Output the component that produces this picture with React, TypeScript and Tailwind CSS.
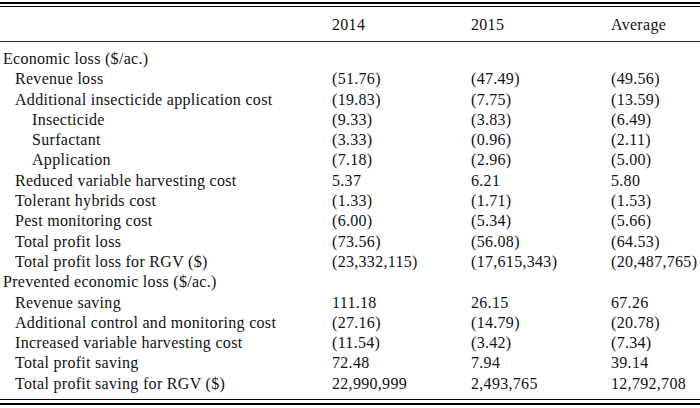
const ROWS: { label: string; level: number; v?: [string, string, string] }[] = [
  { label: "Economic loss ($/ac.)", level: 0 },
  { label: "Revenue loss", level: 1, v: ["(51.76)", "(47.49)", "(49.56)"] },
  { label: "Additional insecticide application cost", level: 1, v: ["(19.83)", "(7.75)", "(13.59)"] },
  { label: "Insecticide", level: 2, v: ["(9.33)", "(3.83)", "(6.49)"] },
  { label: "Surfactant", level: 2, v: ["(3.33)", "(0.96)", "(2.11)"] },
  { label: "Application", level: 2, v: ["(7.18)", "(2.96)", "(5.00)"] },
  { label: "Reduced variable harvesting cost", level: 1, v: ["5.37", "6.21", "5.80"] },
  { label: "Tolerant hybrids cost", level: 1, v: ["(1.33)", "(1.71)", "(1.53)"] },
  { label: "Pest monitoring cost", level: 1, v: ["(6.00)", "(5.34)", "(5.66)"] },
  { label: "Total profit loss", level: 1, v: ["(73.56)", "(56.08)", "(64.53)"] },
  { label: "Total profit loss for RGV ($)", level: 1, v: ["(23,332,115)", "(17,615,343)", "(20,487,765)"] },
  { label: "Prevented economic loss ($/ac.)", level: 0 },
  { label: "Revenue saving", level: 1, v: ["111.18", "26.15", "67.26"] },
  { label: "Additional control and monitoring cost", level: 1, v: ["(27.16)", "(14.79)", "(20.78)"] },
  { label: "Increased variable harvesting cost", level: 1, v: ["(11.54)", "(3.42)", "(7.34)"] },
  { label: "Total profit saving", level: 1, v: ["72.48", "7.94", "39.14"] },
  { label: "Total profit saving for RGV ($)", level: 1, v: ["22,990,999", "2,493,765", "12,792,708"] },
];

const INDENT = ["pl-[3px]", "pl-[15px]", "pl-[32px]"];

export default function App() {
  return (
    <div
      className="w-[700px] h-[408px] bg-white text-[#111] text-[16px] leading-[20.3px] tracking-[0.3px]"
      style={{ fontFamily: "'Liberation Serif', serif" }}
    >
      <div className="pt-[2px]">
        <div className="h-[2px] bg-black" />
        <div className="h-[2px]" />
        <div className="h-[1px] bg-black" />
      </div>
      {/* Header */}
      <div className="grid grid-cols-[332px_139px_140px_89px] h-[35px] items-end pb-[6px] border-b border-[#222]">
        <div />
        <div>2014</div>
        <div>2015</div>
        <div>Average</div>
      </div>
      <div className="pt-[7px]">
        {ROWS.map((r) => (
          <div key={r.label} className="grid grid-cols-[332px_139px_140px_89px] h-[20.3px]">
            <div className={INDENT[r.level]}>{r.label}</div>
            {r.v ? r.v.map((x, i) => <div key={i}>{x}</div>) : null}
          </div>
        ))}
      </div>
      <div className="pt-[5px]">
        <div className="h-[1px] bg-black" />
        <div className="h-[3px]" />
        <div className="h-[2px] bg-black" />
      </div>
    </div>
  );
}
